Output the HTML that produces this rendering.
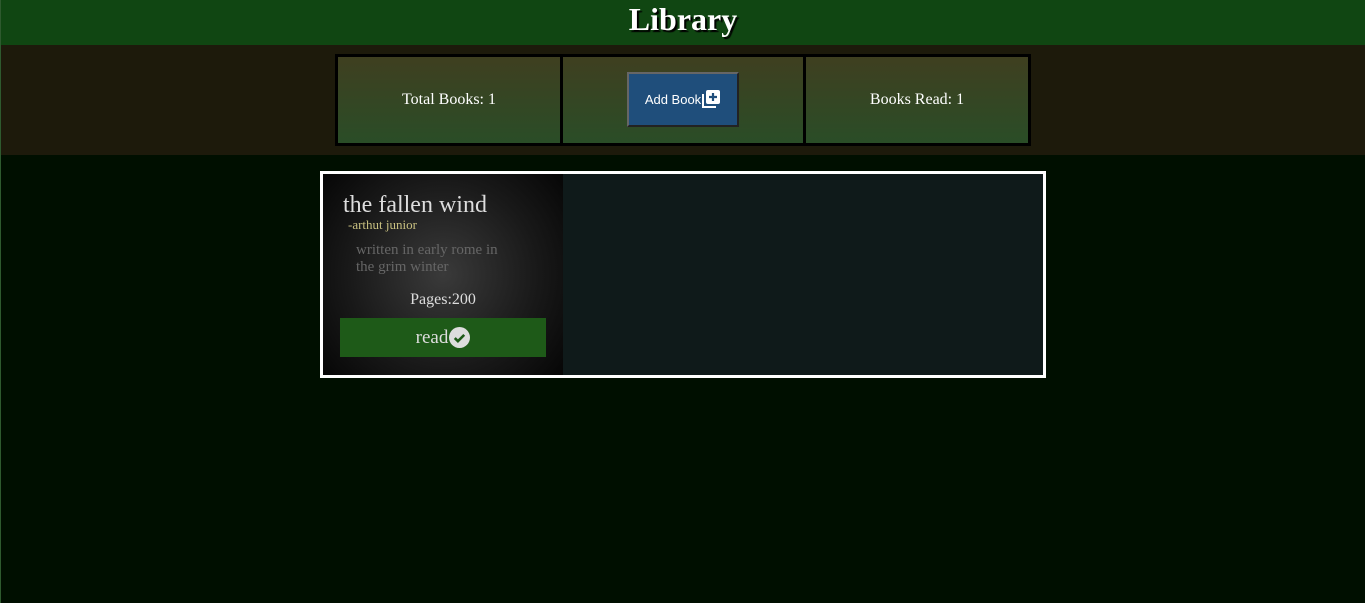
<!DOCTYPE html>
<html><head><style>
body{margin:0;width:1365px;height:603px;background:#000f00;font-family:"Liberation Serif",serif;overflow:hidden;border-left:1px solid #2e5a2e;box-sizing:border-box;position:relative}
.hdr{height:45px;background:#104612;text-align:center;color:#fff;font-weight:bold;font-size:32px;line-height:38px;text-shadow:2px 2px 1px #000}
.bar{height:110px;background:#1d1a0b;position:relative}
.grid{position:absolute;left:334px;top:9px;width:690px;height:86px;border:3px solid #000;background:#000;display:flex;gap:3px}
.c{background:linear-gradient(#3f3f20,#2a4d27);display:flex;align-items:center;justify-content:center;color:#fff;font-size:16px}
.btn{width:112px;height:55px;background:#1f4e7b;border:2px solid;border-color:#666 #222 #222 #666;color:#fff;font-family:"Liberation Sans",sans-serif;font-size:13px;display:flex;align-items:center;justify-content:center;box-sizing:border-box;padding-top:0;margin-top:-2px}
.card{position:absolute;left:319px;top:171px;width:720px;height:201px;border:3px solid #fff;background:#0f1a1a}
.bk{position:absolute;left:0;top:0;width:240px;height:201px;background:radial-gradient(circle at 50% 50%,#3a3a3a,#191919 60%,#060606)}
.t{position:absolute;left:20px;top:18px;color:#ddd;font-size:24px}
.a{position:absolute;left:25px;top:43px;color:#c8c080;font-size:13px}
.d{position:absolute;left:33px;top:68px;color:#666;font-size:15px;line-height:17px}
.p{position:absolute;width:240px;top:117px;text-align:center;color:#ddd;font-size:16px}
.r{position:absolute;left:17px;top:144px;width:206px;height:39px;background:#1e5a18;color:#ddd;font-size:19px;display:flex;align-items:center;justify-content:center}
</style></head><body>
<div class="hdr">Library</div>
<div class="bar"><div class="grid">
<div class="c" style="width:222px">Total Books: 1</div>
<div class="c" style="width:240px"><div class="btn">Add Book<svg width="20" height="20" viewBox="0 0 20 20"><path d="M2 5v13h13" stroke="#fff" stroke-width="2" fill="none"/><rect x="5" y="1" width="14" height="14" rx="2" fill="#fff"/><path d="M12 4v8M8 8h8" stroke="#1f4e7b" stroke-width="2.2"/></svg></div></div>
<div class="c" style="width:222px">Books Read: 1</div>
</div></div>
<div class="card"><div class="bk">
<div class="t">the fallen wind</div>
<div class="a">-arthut junior</div>
<div class="d">written in early rome in<br>the grim winter</div>
<div class="p" style="left:0">Pages:200</div>
<div class="r">read<svg width="21" height="21" viewBox="0 0 20 20" style="margin-left:1px"><circle cx="10" cy="10" r="10" fill="#ddd"/><path d="M5.5 10.5l3 3 6-6" stroke="#1e5a18" stroke-width="2.5" fill="none"/></svg></div>
</div></div>
</body></html>
